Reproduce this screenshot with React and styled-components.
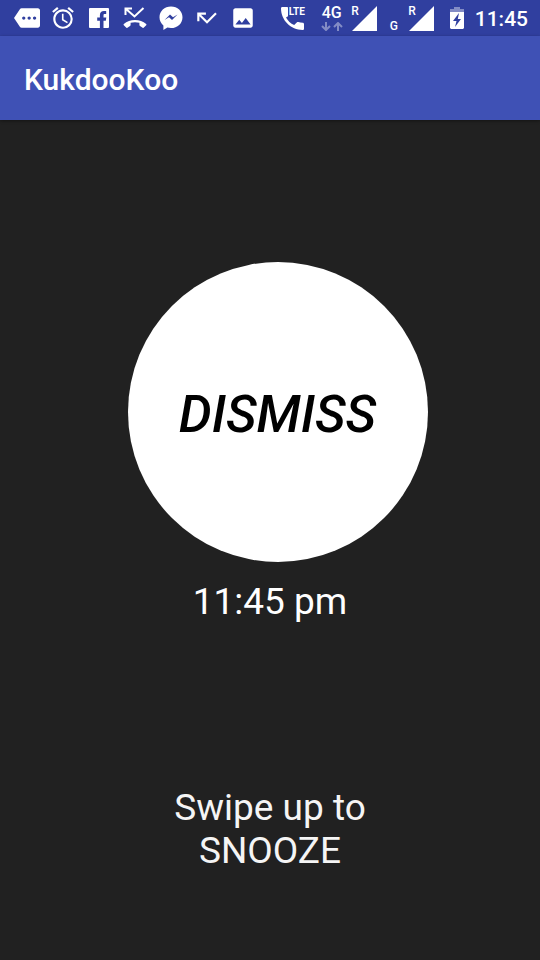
import React from "react";
import styled, { createGlobalStyle } from "styled-components";
import { MdMore, MdAlarm, MdCallMissed, MdImage } from "react-icons/md";

const GlobalStyle = createGlobalStyle`
  * { box-sizing: border-box; }
  body {
    margin: 0;
    background: #212121;
    color: #fff;
    font-family: Roboto, "Noto Sans", sans-serif;
  }
`;

const Screen = styled.div`
  display: flex;
  flex-direction: column;
  min-height: 100vh;
`;

const StatusBar = styled.div`
  display: flex;
  align-items: center;
  justify-content: space-between;
  height: 36px;
  padding: 0 12px 0 9px;
  background: #303f9f;
`;

const Notifications = styled.div`
  display: flex;
`;

const NotificationIcon = styled.span`
  display: flex;
  justify-content: center;
  align-items: center;
  width: 36px;
  height: 36px;
`;

const SystemIcons = styled.div`
  display: flex;
  align-items: center;
`;

const CallStatus = styled.span`
  position: relative;
  display: flex;
  margin-right: 16px;
`;

const CallLabel = styled.span`
  position: absolute;
  top: 0;
  left: 8px;
  font-size: 10px;
  line-height: 10px;
  font-weight: 700;
`;

const Network = styled.span`
  display: flex;
  flex-direction: column;
  align-items: center;
  gap: 2px;
  width: 24px;
  margin-right: 5px;
  font-size: 16px;
  line-height: 14px;
  font-weight: 500;
`;

const Signal = styled.span`
  position: relative;
  display: flex;
  justify-content: flex-end;
  width: ${(p) => (p.$wide ? 44 : 28)}px;
  margin-right: ${(p) => (p.$wide ? 16 : 13)}px;
`;

const SignalLabel = styled.span`
  position: absolute;
  left: ${(p) => (p.$roaming ? "auto" : 0)};
  right: ${(p) => (p.$roaming ? "18px" : "auto")};
  top: ${(p) => (p.$roaming ? "-1px" : "14px")};
  font-size: 12px;
  line-height: 12px;
  font-weight: 500;
`;

const Battery = styled.svg`
  margin-right: 11px;
`;

const Clock = styled.time`
  padding-top: 2px;
  font-size: 21px;
  line-height: 24px;
  font-weight: 500;
`;

const AppBar = styled.header`
  display: flex;
  align-items: center;
  height: 84px;
  padding: 4px 24px 0;
  background: #3f51b5;
  box-shadow: 0 1px 3px rgba(0, 0, 0, 0.4);
`;

const Title = styled.h1`
  margin: 0;
  font-size: 30px;
  line-height: 36px;
  font-weight: 500;
`;

const Main = styled.main`
  display: flex;
  flex-direction: column;
  align-items: center;
  padding: 142px 0 88px;
`;

const DismissButton = styled.button`
  width: 300px;
  height: 300px;
  margin-left: 15px;
  padding: 6px 0 0;
  border: 0;
  border-radius: 50%;
  background: #fff;
  color: #000;
  font-family: inherit;
  font-size: 52px;
  line-height: 60px;
  font-weight: 500;
  font-style: italic;
  cursor: pointer;
`;

const AlarmTime = styled.time`
  margin-top: 18px;
  font-size: 37px;
  line-height: 44px;
`;

const SnoozeHint = styled.p`
  margin: 162px 0 0;
  color: #f5f5f5;
  font-size: 37px;
  line-height: 43px;
  text-align: center;
`;

const FacebookIcon = () => (
  <svg width="20" height="20" viewBox="0 0 20 20">
    <path
      fill="#fff"
      d="M1 0h18a1 1 0 0 1 1 1v18a1 1 0 0 1-1 1h-4.500v-7.200h2.300l.5-3.300h-2.800V7.400c0-.9.3-1.300 1.400-1.300H17.200V3.200c-.3 0-1.300-.1-2.300-.1-2.400 0-4 1.400-4 4.100v2.300H8.200v3.300h2.700V20H1a1 1 0 0 1-1-1V1a1 1 0 0 1 1-1z"
    />
  </svg>
);

const MissedCallIcon = () => (
  <svg width="24" height="24" viewBox="0 0 24 24">
    <path fill="none" stroke="#fff" strokeWidth="2" d="M2.500 9V2.500H9M2.500 2.500L11.500 10.500 20.500 2" />
    <path
      fill="#fff"
      d="M12 14c-4.200 0-8.200 1.400-11.200 4-.4.4-.4.900 0 1.300l2.300 2.300c.4.4.9.4 1.300.1l2.600-1.700c.4-.3.6-.6.6-1v-2.200c2.900-.8 5.900-.8 8.800 0V19c0 .4.200.7.6 1l2.600 1.700c.4.3.9.3 1.300-.1l2.300-2.300c.4-.4.4-.9 0-1.300-3-2.600-7-4-11.200-4z"
    />
  </svg>
);

const MessengerIcon = () => (
  <svg width="24" height="24" viewBox="0 0 24 24">
    <path
      fill="#fff"
      fillRule="evenodd"
      d="M12 .5C5.500.5.500 5.200.500 11.200c0 3.300 1.500 6.200 3.900 8.200V24l4-2.400c1.100.3 2.300.5 3.600.5 6.500 0 11.500-4.800 11.500-10.900S18.500.5 12 .5zM5.500 14l5.500-5.500 3 2.800 4.500-2.800-5.500 5.500-3-2.800z"
    />
  </svg>
);

const PhoneIcon = () => (
  <svg width="23" height="23" viewBox="0 0 23 23">
    <path
      fill="#fff"
      d="M1.300 0H6c.6 0 1 .4 1 1v8.200L5 10.500c1.800 3.400 4.600 5.800 8.200 7.600l2.800-2.800c.3-.3.8-.4 1.300-.3 1.400.5 2.900.7 4.400.7.700 0 1.300.6 1.300 1.300v4.700c0 .7-.6 1.300-1.300 1.300C9.700 23 0 13.300 0 1.300 0 .6.600 0 1.300 0z"
    />
  </svg>
);

const DataArrows = () => (
  <svg width="22" height="9" viewBox="0 0 22 9" fill="none" stroke="#838cc5" strokeWidth="2">
    <path d="M5 0v8M1 4l4 4 4-4M17 9V1M13 5l4-4 4 4" />
  </svg>
);

const SignalIcon = () => (
  <svg width="25" height="25" viewBox="0 0 25 25">
    <path fill="#fff" d="M25 0v25H0z" />
  </svg>
);

const BatteryIcon = () => (
  <Battery width="14" height="22" viewBox="0 0 14 22">
    <path fill="#838cc5" d="M4 0h6v2h4v4H0V2h4z" />
    <path fill="#fff" fillRule="evenodd" d="M0 5h14v16l-1 1H1l-1-1zM9 6L3 14h3.500L5 20l6-8H7.800z" />
  </Battery>
);

const notifications = [
  <MdMore size={26} />,
  <MdAlarm size={26} />,
  <FacebookIcon />,
  <MissedCallIcon />,
  <MessengerIcon />,
  <MdCallMissed size={26} />,
  <MdImage size={26} />,
];

export default function App() {
  return (
    <Screen>
      <GlobalStyle />
      <StatusBar>
        <Notifications>
          {notifications.map((icon, i) => (
            <NotificationIcon key={i}>{icon}</NotificationIcon>
          ))}
        </Notifications>
        <SystemIcons>
          <CallStatus>
            <PhoneIcon />
            <CallLabel>LTE</CallLabel>
          </CallStatus>
          <Network>
            4G
            <DataArrows />
          </Network>
          <Signal>
            <SignalLabel $roaming>R</SignalLabel>
            <SignalIcon />
          </Signal>
          <Signal $wide>
            <SignalLabel>G</SignalLabel>
            <SignalLabel $roaming>R</SignalLabel>
            <SignalIcon />
          </Signal>
          <BatteryIcon />
          <Clock>11:45</Clock>
        </SystemIcons>
      </StatusBar>
      <AppBar>
        <Title>KukdooKoo</Title>
      </AppBar>
      <Main>
        <DismissButton type="button">DISMISS</DismissButton>
        <AlarmTime>11:45 pm</AlarmTime>
        <SnoozeHint>
          Swipe up to
          <br />
          SNOOZE
        </SnoozeHint>
      </Main>
    </Screen>
  );
}
